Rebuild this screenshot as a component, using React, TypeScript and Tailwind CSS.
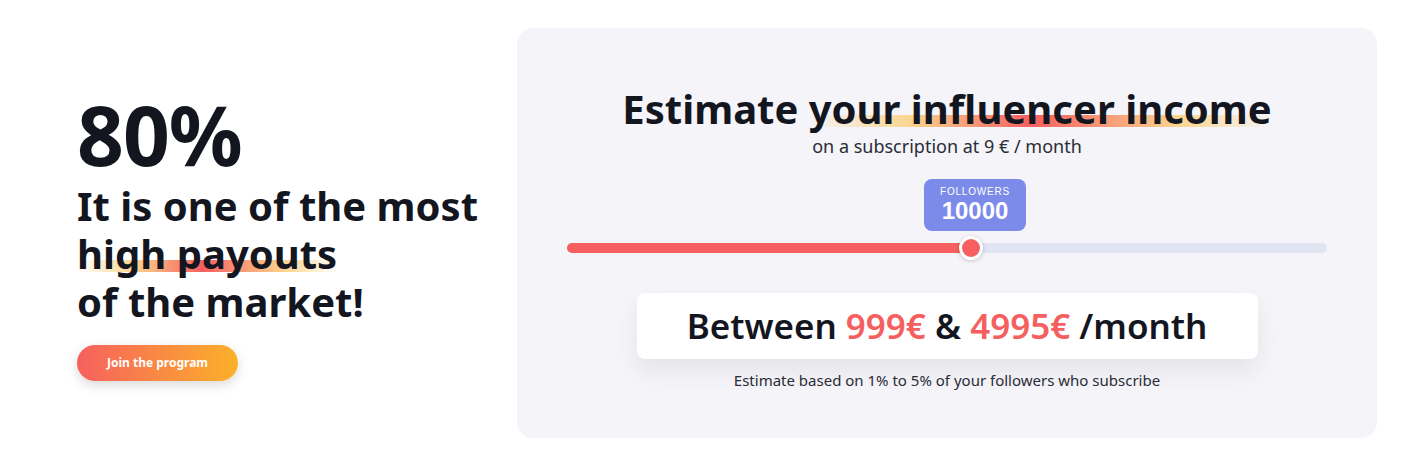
export default function App() {
  const hl =
    "bg-[linear-gradient(90deg,rgba(252,211,141,0)_0%,#fad58f_22%,#f65f5f_48%,#fad58f_80%,rgba(252,211,141,0)_100%)] bg-no-repeat bg-[length:100%_12px] bg-[position:0_80%]";
  return (
    <div className="w-[1419px] h-[471px] bg-white flex font-['Noto_Sans',sans-serif] text-[#14161f]">
      <div className="w-[517px] pl-[77px] flex flex-col justify-center pb-[12px]">
        <div className="mt-[14px] text-[82px] font-bold leading-none tracking-[-1px]">80%</div>
        <div className="mt-[7px] text-[40px] font-bold leading-[48px]">
          It is one of the most
          <br />
          <span className={hl}>high payouts</span>
          <br />
          of the market!
        </div>
        <button className="mt-[19px] w-[161px] h-[36px] rounded-full bg-[linear-gradient(90deg,#f7605e,#fbb12a)] text-white text-[12px] font-bold shadow-[0_4px_12px_rgba(0,0,0,0.15)]">
          Join the program
        </button>
      </div>
      <div className="mt-[28px] w-[860px] h-[410px] rounded-[16px] bg-[#f4f4f9] flex flex-col items-center pt-[56px]">
        <h2 className="text-[40px] font-bold leading-[50px]">
          Estimate <span className={hl}>your influencer income</span>
        </h2>
        <p className="text-[18px] leading-[24px] text-[#2a2c36]">on a subscription at 9 € / month</p>
        <div className="mt-[21px] w-[760px]">
          <div className="ml-[357px] w-[102px] h-[52px] rounded-[8px] bg-[#7c8bea] text-white flex flex-col items-center justify-center font-['Liberation_Sans',sans-serif]">
            <span className="text-[10px] leading-[12px] tracking-[0.8px]">FOLLOWERS</span>
            <span className="text-[24px] font-bold leading-[26px]">10000</span>
          </div>
        </div>
        <div className="relative mt-[12px] w-[760px] h-[10px] rounded-full bg-[#e1e4f3]">
          <div className="h-full w-[404px] rounded-l-full bg-[#f65f5f]" />
          <div className="absolute left-[392px] top-[-7px] w-[24px] h-[24px] rounded-full bg-[#f65f5f] border-[3px] border-white shadow-[0_1px_4px_rgba(0,0,0,0.2)]" />
        </div>
        <div className="mt-[40px] w-[621px] h-[66px] rounded-[8px] bg-white flex items-center justify-center text-[35px] font-semibold shadow-[0_12px_24px_rgba(0,0,0,0.07)]">
          Between&nbsp;<span className="text-[#f65f5f]">999€</span>&nbsp;&amp;&nbsp;<span className="text-[#f65f5f]">4995€</span>&nbsp;/month
        </div>
        <p className="mt-[10px] text-[15px] text-[#2a2c36]">Estimate based on 1% to 5% of your followers who subscribe</p>
      </div>
    </div>
  );
}
